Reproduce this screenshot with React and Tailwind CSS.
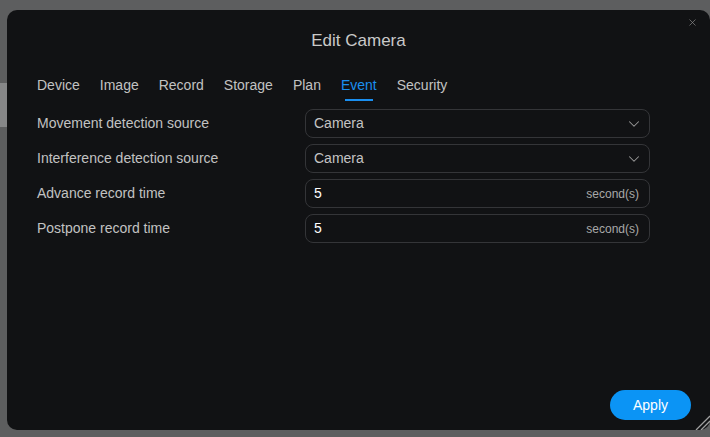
import { ChevronDown, X } from 'lucide-react';

const TABS = ['Device', 'Image', 'Record', 'Storage', 'Plan', 'Event', 'Security'];

function SelectBox({ value }) {
  return (
    <div className="flex h-[29px] w-[345px] items-center justify-between rounded-lg border border-[#343538] pl-[8px] pr-[6px] text-[14px] text-[#c4c4c4]">
      <span>{value}</span>
      <ChevronDown size={18} strokeWidth={1.4} className="text-[#9a9a9a]" />
    </div>
  );
}

function NumberBox({ value }) {
  return (
    <div className="flex h-[29px] w-[345px] items-center justify-between rounded-lg border border-[#343538] pl-[8px] pr-[10px]">
      <span className="text-[14px] text-white">{value}</span>
      <span className="text-[12px] text-[#a8a8a8]">second(s)</span>
    </div>
  );
}

const ROWS = [
  { label: 'Movement detection source', field: <SelectBox value="Camera" /> },
  { label: 'Interference detection source', field: <SelectBox value="Camera" /> },
  { label: 'Advance record time', field: <NumberBox value="5" /> },
  { label: 'Postpone record time', field: <NumberBox value="5" /> },
];

export default function App() {
  return (
    <div
      className="flex h-[437px] w-[710px] overflow-hidden bg-[#5d5e5f]"
      style={{ fontFamily: '"Liberation Sans", Arial, sans-serif' }}
    >
      <div className="flex w-[7px] shrink-0 flex-col">
        <div className="h-[83px] shrink-0" />
        <div className="h-[44px] shrink-0 bg-[#868788]" />
      </div>
      <div className="relative mt-[10px] flex h-[420px] w-[703px] shrink-0 flex-col rounded-[10px] bg-[#111214]">
        <button className="absolute right-[12px] top-[7px] text-[#8a8a8a]">
          <X size={11} strokeWidth={1.5} />
        </button>
        <h1 className="pt-[20px] text-center text-[17px] leading-[22px] text-[#c9c9c9]">Edit Camera</h1>
        <div className="mt-[24px] flex gap-[20px] pl-[30px] text-[14px] text-[#c2c2c2]">
          {TABS.map((t) => (
            <div key={t} className="relative pb-[6px] leading-[18px]">
              <span className={t === 'Event' ? 'text-[#1a8ff0]' : ''}>{t}</span>
              {t === 'Event' && (
                <div className="absolute bottom-[-1px] left-[4px] right-[4px] h-[2px] bg-[#1a8ff0]" />
              )}
            </div>
          ))}
        </div>
        <div className="mt-[9px] flex flex-col gap-[6px] pl-[30px]">
          {ROWS.map((r) => (
            <div key={r.label} className="flex items-center">
              <div className="w-[268px] text-[14px] text-[#c2c2c2]">{r.label}</div>
              {r.field}
            </div>
          ))}
        </div>
        <div className="flex-1" />
        <div className="flex justify-end pb-[10px] pr-[19px]">
          <button className="h-[30px] w-[81px] rounded-full bg-[#0b94f5] text-[14px] text-white">Apply</button>
        </div>
        <svg className="absolute bottom-0 right-0" width="16" height="16" viewBox="0 0 16 16">
          <path d="M16 2 L2 16 M16 7 L7 16" stroke="#a0a0a0" strokeWidth="1.3" />
        </svg>
      </div>
    </div>
  );
}
